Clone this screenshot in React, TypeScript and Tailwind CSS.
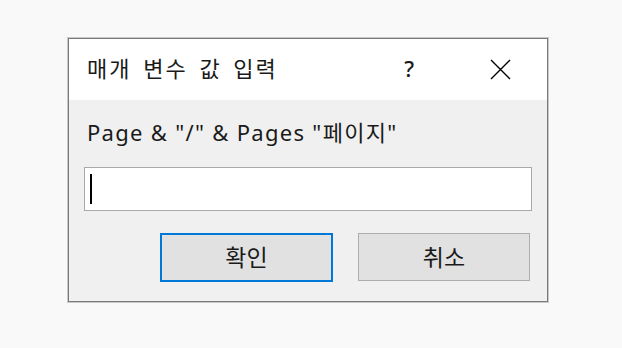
export default function App() {
  return (
    <div className="min-h-screen w-full bg-[#f9f9f9] pt-[38px] pl-[68px] font-['Noto_Sans','Noto_Sans_CJK_KR',sans-serif] text-[#1a1a1a]">
      <div className="w-[480px] h-[264px] border border-[#7a7a7a] shadow-[0_0_0_1px_#c8c8c8] bg-[#f0f0f0] flex flex-col">
        {/* title bar */}
        <div className="h-[61px] bg-white flex items-center pl-[18px] pr-[36px] shrink-0">
          <span className="text-[22px] leading-none tracking-[2px] [word-spacing:4px] -mt-[3px]">매개 변수 값 입력</span>
          <span className="ml-auto mr-[76px] text-[22px] leading-none font-medium -mt-[3px]">?</span>
          <svg width="21" height="21" viewBox="0 0 21 21" className="text-black">
            <path d="M1 1 L20 20 M20 1 L1 20" stroke="currentColor" strokeWidth="1.4" fill="none" />
          </svg>
        </div>

        {/* body */}
        <div className="flex flex-col px-[15px] pt-[18px]">
          <div className="pl-[3px] text-[22px] leading-[28px] tracking-[1.3px]">Page &amp; "/" &amp; Pages "페이지"</div>
          <div className="mt-[21px] h-[44px] border border-[#a9a9a9] bg-white flex items-center pl-[5px]">
            <div className="w-[2px] h-[30px] bg-black" />
          </div>
          <div className="mt-[22px] flex justify-end gap-[25px] pr-[2px]">
            <button className="w-[173px] h-[49px] border-2 border-[#0078d7] bg-[#e1e1e1] text-[23px] leading-none">
              확인
            </button>
            <button className="w-[172px] h-[48px] border border-[#adadad] bg-[#e1e1e1] text-[23px] leading-none">
              취소
            </button>
          </div>
        </div>
      </div>
    </div>
  );
}
